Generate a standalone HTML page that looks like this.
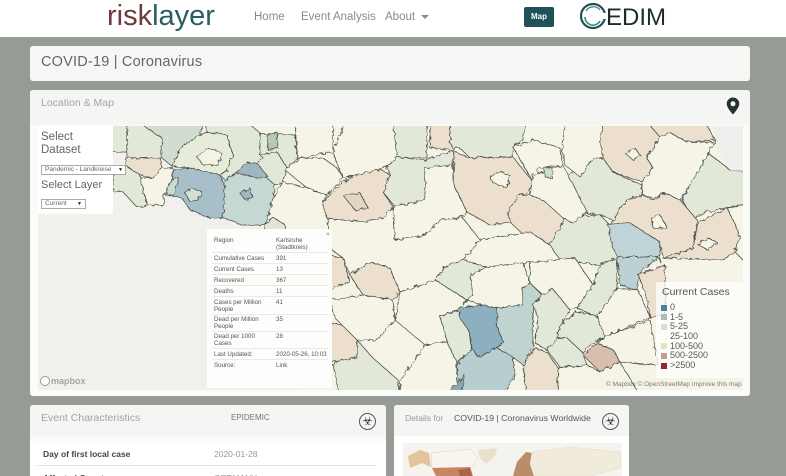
<!DOCTYPE html>
<html><head><meta charset="utf-8"><style>
html,body{margin:0;padding:0;width:786px;height:476px;overflow:hidden}
body{position:relative;background:#969b95;font-family:"Liberation Sans",sans-serif}
.a{position:absolute;white-space:nowrap}
.card{position:absolute;background:#f6f6f5;border-radius:3px}
.t{position:absolute;white-space:nowrap;font-size:6.2px;color:#555;line-height:7px}
.r{position:absolute;left:212px;width:116px;height:1px;background:#e9e9e6}
.l{position:absolute;left:661px;width:6px;height:6px}
.lt{position:absolute;left:670px;font-size:9px;color:#555;line-height:10px;white-space:nowrap}
</style></head><body>
<div class="a" style="left:0;top:0;width:786px;height:37px;background:#fff"></div>
<div class="a" style="left:107px;top:-2px;font-size:29px;line-height:36px;color:#2b5d60"><span style="color:#6f3a3d">risk</span>layer</div>
<div class="a" style="left:254px;top:11px;font-size:11.500px;color:#8a8a8a">Home</div>
<div class="a" style="left:301px;top:11px;font-size:11.500px;color:#8a8a8a">Event Analysis</div>
<div class="a" style="left:385px;top:11px;font-size:11.500px;color:#8a8a8a">About</div>
<div class="a" style="left:421px;top:15px;border:4px solid transparent;border-top-color:#8a8a8a;border-bottom:0"></div>
<div class="a" style="left:524px;top:7px;width:30px;height:20px;background:#1f5258;border-radius:2px;color:#fff;font-size:8px;font-weight:bold;line-height:20px;text-align:center">Map</div>
<svg class="a" style="left:578px;top:1px" width="30" height="30" viewBox="0 0 30 30"><circle cx="15" cy="15" r="12" fill="none" stroke="#1f5258" stroke-width="2.2"/><path d="M7 16a8 8 0 0 0 15 4" fill="none" stroke="#3e8a8c" stroke-width="1.6"/><path d="M8 10a8.500 8.500 0 0 1 14-1" fill="none" stroke="#3e8a8c" stroke-width="1.300"/><rect x="23" y="12" width="7" height="6" fill="#fff"/></svg>
<div class="a" style="left:606px;top:2px;font-size:24px;line-height:32px;color:#1c2c2e">EDIM</div>

<div class="card" style="left:30px;top:46px;width:720px;height:35px"></div>
<div class="a" style="left:41px;top:54px;font-size:14.500px;line-height:17px;color:#666;letter-spacing:.2px">COVID-19 | Coronavirus</div>

<div class="card" style="left:30px;top:90px;width:720px;height:306px;background:#fbfbfa"></div>
<div class="a" style="left:30px;top:90px;width:720px;height:35px;background:#f5f5f4;border-radius:3px 3px 0 0"></div>
<div class="a" style="left:41px;top:97px;font-size:10.500px;line-height:13px;color:#a5a5a5">Location &amp; Map</div>
<svg class="a" style="left:726px;top:97px" width="14" height="18" viewBox="0 0 14 18"><path fill-rule="evenodd" d="M7 0.500a6.300 6.300 0 0 1 6.300 6.300C13.300 11 7 17.500 7 17.500S.7 11 .7 6.800A6.300 6.300 0 0 1 7 .5zM7 4.300a2.500 2.500 0 1 0 0 5 2.500 2.500 0 0 0 0-5z" fill="#263230"/></svg>

<svg class="a" style="left:0;top:0" width="786" height="476" viewBox="0 0 786 476">
<defs>
<clipPath id="mc"><rect x="38" y="126" width="705" height="264"/></clipPath>
<filter id="j" x="-5%" y="-5%" width="110%" height="110%"><feTurbulence type="fractalNoise" baseFrequency=".22" numOctaves="2" seed="4"/><feDisplacementMap in="SourceGraphic" scale="4.500"/><feGaussianBlur stdDeviation=".25"/></filter>
<linearGradient id="bg" x1="0" x2="1"><stop offset="0" stop-color="#f1f0ec"/><stop offset=".2" stop-color="#f1f0eb"/><stop offset=".27" stop-color="#f3f3e6"/><stop offset="1" stop-color="#f5f4e6"/></linearGradient>
</defs>
<g clip-path="url(#mc)">
<rect x="38" y="126" width="705" height="264" fill="url(#bg)"/>
<g filter="url(#j)" stroke="#4a4f48" stroke-width=".8" stroke-linejoin="round">
<g fill="#f1f0ec" stroke="none"><path d="M38 210H210L240 225 262 228 290 240 300 390H38Z"/></g>
<g fill="#f5f4e6">
<path d="M273 198L283 182 307 188 327 195 323 202 327 218 332 232 285 232 265 225Z"/>
<path d="M327 218L367 222 383 217 393 207 395 240 425 235 440 220 462 217 480 240 463 260 447 265 435 280 400 292 390 268 370 262 350 275 343 258 332 250Z"/>
</g>
<g fill="#e1e8d7">
<path d="M108 122H127V152H108Z"/>
<path d="M127 122H162V158H127Z"/>
<path d="M113 168L125 165 140 175 143 188 147 205 137 207 123 192 113 192Z"/>
<path d="M205 122H247L260 133 263 158 257 163 247 163 237 172 225 180 220 175 227 170 233 155 227 135 207 132Z"/>
<path d="M173 167L180 148 200 135 207 132 227 135 233 155 227 170 220 175 190 168Z" fill="#e7ebd9"/>
<path d="M260 133L295 135 297 158 285 170 287 168 277 152 260 155Z"/>
<path d="M260 155L277 152 287 168 283 182 275 185 267 178 257 163 263 158Z"/>
<path d="M393 122H427V158L397 157Z"/>
<path d="M450 122H525L523 140 513 147 512 157 493 157 470 158 460 148 453 150 450 142Z"/>
<path d="M387 167L397 157 425 160 453 150 453 165 430 168 425 200 395 207 383 192 390 175Z"/>
<path d="M565 178L593 158 603 158 613 172 642 185 642 195 627 200 613 220 600 215 587 213 575 195Z"/>
<path d="M707 152L730 170 748 172V203L707 212 693 218 682 200 688 188Z"/>
<path d="M543 245L565 220 587 215 600 215 610 225 620 242 618 260 600 265 560 260Z"/>
<path d="M435 280L447 265 463 260 487 267 470 275 473 295 467 300 437 283Z"/>
<path d="M440 317L458 310 470 333 472 348 457 363 447 342Z"/>
<path d="M533 305L543 295 552 288 570 310 560 325 557 338 547 350 535 343 538 318Z"/>
<path d="M560 325L577 312 597 315 605 337 593 343 582 352 567 338 557 338Z"/>
<path d="M547 350L557 338 567 338 582 352 587 365 560 367Z"/>
<path d="M577 308L593 285 600 265 617 257 617 288 597 317Z"/>
<path d="M333 365L357 340 373 358 398 380 400 395H340Z"/>
</g>
<path d="M138 122H203L200 135 180 148 173 167 162 158 162 138Z" fill="#d1ddd0"/>
<path d="M267 135L277 132 278 148 268 150Z" fill="#b5c9bb"/>
<path d="M197 157L208 148 222 153 218 165 203 165Z" fill="#f4f3e4"/>
<g fill="#ecdfce">
<path d="M125 158L160 158 162 168 153 178 140 175 125 165Z"/>
<path d="M323 202L343 182 355 175 373 165 390 175 383 192 393 207 383 217 367 222 327 218Z"/>
<path d="M430 122H450V142L453 150 430 148Z"/>
<path d="M455 152L470 158 513 157 533 182 528 193 518 195 508 212 510 222 490 225 467 212 453 183Z"/>
<path d="M518 195L530 195 543 200 565 218 550 245 527 238 510 222 508 212Z"/>
<path d="M600 122H647L660 137 647 158 653 168 642 182 613 172 603 158 600 138Z"/>
<path d="M647 122H705L715 140 687 142 670 133 660 137Z"/>
<path d="M613 220L627 200 642 195 653 200 665 193 680 200 697 220 693 248 663 258 660 242 627 223 610 225Z"/>
<path d="M698 222L727 208 740 235 735 252 723 260 663 258 693 248Z"/>
<path d="M350 275L370 262 390 268 400 292 393 300 363 295Z"/>
<path d="M328 255L343 258 350 282 328 290Z"/>
<path d="M328 322L358 328 357 358 328 362Z"/>
<path d="M523 365L535 348 547 352 558 368 558 395H527Z"/>
<path d="M638 275L665 265V315L650 317 647 298Z"/>
</g>
<path d="M343 195L360 193 368 208 355 210Z" fill="#e4d5c0"/>
<g fill="#f5f4e6">
<path d="M140 178L153 178 162 168 173 168 172 180 163 195 165 205 147 205 143 188Z"/>
<path d="M285 170L300 158 323 158 337 168 343 178 327 195 307 188Z"/>
<path d="M295 122L333 122 333 152 297 158Z"/>
<path d="M333 152L345 122H393L397 157 387 167 357 175 343 178Z"/>
<path d="M425 168L453 165 453 183 467 212 462 217 440 220 425 235 395 240 393 207 425 200Z"/>
<path d="M513 147L533 140 560 148 563 165 540 168 533 182Z"/>
<path d="M530 195L533 175 563 165 587 212 573 223 563 218 543 200Z"/>
<path d="M565 122H603L600 138 603 158 593 158 580 177 565 165 562 150Z"/>
<path d="M647 158L660 137 670 133 687 142 715 142 703 163 688 188 680 200 665 193 653 198 643 195 642 182 653 168Z"/>
<path d="M727 208L748 205V265L735 252 740 235Z"/>
<path d="M490 177L500 172 510 175 507 188 493 183Z"/>
<path d="M625 153L635 148 640 155 633 160Z"/>
<path d="M652 218L660 215 667 228 653 228Z"/>
<path d="M698 245L707 238 717 242 708 250Z"/>
<path d="M400 292L435 280 467 300 460 308 440 317 447 342 425 345 395 320Z"/>
<path d="M330 300L363 295 393 300 395 320 375 340 357 340 335 318Z"/>
<path d="M400 380L425 345 447 342 457 363 457 395 400 395Z"/>
<path d="M487 267L523 262 530 283 522 288 523 305 497 308 483 305 467 300 473 295 470 275Z"/>
<path d="M530 262L575 258 593 285 577 308 570 310 552 288 543 295 530 283Z"/>
<path d="M597 317L617 288 638 290 650 317 605 337Z"/>
<path d="M605 337L650 320 658 365 620 362 613 350 597 343Z"/>
<path d="M558 368L587 365 600 372 620 362 640 395H558Z"/>
<path d="M530 232L550 245 560 260 530 262 487 267 463 260 480 240Z"/>
</g>
<g fill="#a6bfc8"><path d="M173 170L190 168 220 175 225 188 225 202 222 218 210 218 190 210 182 198 165 195 173 182Z"/></g>
<path d="M172 180L179 178 173 195 165 195Z" fill="#c8d9d6"/>
<path d="M185 193L193 188 202 192 198 200 190 202Z" fill="#d3dfd2"/>
<path d="M225 180L237 172 267 178 275 185 273 198 265 225 243 225 223 218 225 188Z" fill="#c6d8d4"/>
<path d="M236 173L247 163 257 163 268 177 257 178Z" fill="#9db7c1"/>
<path d="M240 193L250 188 253 197 245 200Z" fill="#a0b9c1"/>
<path d="M265 225L273 217 285 225 287 240 265 240Z" fill="#dfe6d4"/>
<path d="M543 167L553 168 552 178 545 177Z" fill="#cedcd0"/>
<path d="M608 225L630 223 660 242 660 262 658 257 617 257 612 245Z" fill="#bfd4d6"/>
<path d="M617 257L658 257 638 275 637 290 620 285Z" fill="#bcd1d4"/>
<path d="M497 308L523 305 522 288 530 283 542 295 533 305 533 345 523 365 513 357 497 348 503 342 497 327Z" fill="#bfd3d1"/>
<path d="M457 365L472 348 478 357 497 348 513 357 515 375 503 395H457Z" fill="#b7cdd0"/>
<path d="M460 308L483 305 497 308 497 327 503 342 497 348 478 357 472 348 470 333 460 318Z" fill="#8eafc0"/>
<path d="M452 387L465 375 462 395H450Z" fill="#8ba7b4"/>
<path d="M583 355L597 343 613 350 620 362 600 372Z" fill="#d8bead"/>
<path d="M715 122H748V172L730 170 715 148Z" fill="#eeeeec" stroke="none"/>
</g>
<rect x="656" y="282" width="87" height="96" fill="#fff" fill-opacity=".72"/>
</g>
<text x="606" y="386" font-family="Liberation Sans" font-size="6.500" fill="#7c7c7c">© Mapbox © OpenStreetMap  Improve this map</text>
<circle cx="45" cy="381" r="4.500" fill="#fff" stroke="#9b9b9b" stroke-width="1"/>
<text x="51" y="384" font-family="Liberation Sans" font-size="9" font-weight="bold" fill="#a5a5a5">mapbox</text>
</svg>

<!-- dataset panel -->
<div class="a" style="left:38px;top:126px;width:75px;height:88px;background:#fff"></div>
<div class="a" style="left:41px;top:131px;font-size:11.500px;line-height:13px;color:#666;white-space:normal;width:60px">Select Dataset</div>
<div class="a" style="left:41px;top:165px;width:85px;height:10px;border:1px solid #aaa;box-sizing:border-box;background:#fff;font-size:6.500px;line-height:8px;color:#666;padding-left:3px">Pandemic - Landkreise<span style="position:absolute;right:2px;font-size:5px;color:#222">▼</span></div>
<div class="a" style="left:41px;top:178px;font-size:11px;line-height:14px;color:#666">Select Layer</div>
<div class="a" style="left:41px;top:199px;width:45px;height:10px;border:1px solid #aaa;box-sizing:border-box;background:#fff;font-size:6.500px;line-height:8px;color:#666;padding-left:3px">Current<span style="position:absolute;right:3px;font-size:5px;color:#222">▼</span></div>

<!-- popup -->
<div class="a" style="left:207px;top:229px;width:125px;height:159px;background:#fdfdfb"></div>
<div class="t" style="left:326px;top:231px;color:#777">×</div>
<div class="t" style="left:214px;top:237px">Region</div><div class="t" style="left:276px;top:237px">Karlsruhe<br>(Stadtkreis)</div>
<div class="r" style="top:252px"></div>
<div class="t" style="left:214px;top:255px">Cumulative Cases</div><div class="t" style="left:276px;top:255px">391</div>
<div class="r" style="top:263px"></div>
<div class="t" style="left:214px;top:266px">Current Cases</div><div class="t" style="left:276px;top:266px">13</div>
<div class="r" style="top:274px"></div>
<div class="t" style="left:214px;top:277px">Recovered</div><div class="t" style="left:276px;top:277px">367</div>
<div class="r" style="top:285px"></div>
<div class="t" style="left:214px;top:288px">Deaths</div><div class="t" style="left:276px;top:288px">11</div>
<div class="r" style="top:296px"></div>
<div class="t" style="left:214px;top:299px">Cases per Million<br>People</div><div class="t" style="left:276px;top:299px">41</div>
<div class="r" style="top:314px"></div>
<div class="t" style="left:214px;top:316px">Dead per Million<br>People</div><div class="t" style="left:276px;top:316px">35</div>
<div class="r" style="top:331px"></div>
<div class="t" style="left:214px;top:333px">Dead per 1000<br>Cases</div><div class="t" style="left:276px;top:333px">28</div>
<div class="r" style="top:348px"></div>
<div class="t" style="left:214px;top:351px">Last Updated:</div><div class="t" style="left:276px;top:351px">2020-05-26, 10:03</div>
<div class="r" style="top:359px"></div>
<div class="t" style="left:214px;top:362px">Source:</div><div class="t" style="left:276px;top:362px">Link</div>

<!-- legend -->
<div class="a" style="left:662px;top:286px;font-size:10.500px;line-height:13px;color:#555">Current Cases</div>
<div class="l" style="top:305px;background:#4f7f96"></div><div class="lt" style="top:302px">0</div>
<div class="l" style="top:314px;background:#a8bfbd"></div><div class="lt" style="top:312px">1-5</div>
<div class="l" style="top:324px;background:#d9dfd4"></div><div class="lt" style="top:321px">5-25</div>
<div class="lt" style="top:331px">25-100</div>
<div class="l" style="top:343px;background:#e6dfc0"></div><div class="lt" style="top:341px">100-500</div>
<div class="l" style="top:353px;background:#bfa08f"></div><div class="lt" style="top:350px">500-2500</div>
<div class="l" style="top:363px;background:#8e2c2c"></div><div class="lt" style="top:360px">&gt;2500</div>

<!-- event card -->
<div class="card" style="left:30px;top:405px;width:356px;height:71px;background:#fff;border-radius:3px 3px 0 0"></div>
<div class="a" style="left:30px;top:405px;width:356px;height:31px;background:#f5f5f4;border-radius:3px 3px 0 0"></div>
<div class="a" style="left:30px;top:436px;width:356px;height:5px;background:#fafafa"></div>
<div class="a" style="left:41px;top:412px;font-size:10.500px;line-height:13px;color:#a3a3a3">Event Characteristics</div>
<div class="a" style="left:231px;top:413px;font-size:8px;line-height:10px;color:#777">EPIDEMIC</div>
<div class="a" style="left:359px;top:413px;width:15px;height:15px;border:1px solid #555;border-radius:50%;font-family:'DejaVu Sans',sans-serif;font-size:12px;line-height:15px;text-align:center;color:#333">☣</div>
<div class="a" style="left:43px;top:449px;font-size:8.500px;line-height:10px;color:#444;font-weight:bold">Day of first local case</div>
<div class="a" style="left:214px;top:449px;font-size:8.500px;line-height:10px;color:#999">2020-01-28</div>
<div class="a" style="left:37px;top:465px;width:340px;height:1px;background:#e4e4e2"></div>
<div class="a" style="left:43px;top:473px;font-size:8.500px;line-height:10px;color:#444;font-weight:bold">Affected Country</div>
<div class="a" style="left:214px;top:473px;font-size:8.500px;line-height:10px;color:#999">GERMANY</div>

<!-- details card -->
<div class="card" style="left:394px;top:405px;width:235px;height:71px;background:#fff;border-radius:3px 3px 0 0"></div>
<div class="a" style="left:394px;top:405px;width:235px;height:31px;background:#f5f5f4;border-radius:3px 3px 0 0"></div>
<div class="a" style="left:405px;top:413px;font-size:8.500px;line-height:10px;color:#999">Details for</div>
<div class="a" style="left:454px;top:413px;font-size:8.700px;line-height:10px;color:#555">COVID-19 | Coronavirus Worldwide</div>
<div class="a" style="left:602px;top:413px;width:15px;height:15px;border:1px solid #555;border-radius:50%;font-family:'DejaVu Sans',sans-serif;font-size:12px;line-height:15px;text-align:center;color:#333">☣</div>
<svg class="a" style="left:403px;top:443px" width="219" height="33" viewBox="403 443 219 33">
<rect x="403" y="443" width="219" height="33" fill="#f4f3ee"/>
<path d="M408 456L420 450 429 453 431 467 422 463 410 468Z" fill="#e4c49a"/>
<path d="M431 453L470 449 478 458 472 468 432 468Z" fill="#f7f5ee" stroke="#d8d4c6" stroke-width=".5"/>
<path d="M478 450L497 448 495 456 486 464 480 458Z" fill="#e8e2cc"/>
<path d="M432 468L470 467 473 476H436Z" fill="#c98562"/>
<path d="M458 470L470 468 472 476H460Z" fill="#a8654a"/>
<path d="M517 462L526 452 532 453 530 464 534 476H513Z" fill="#b98d6a"/>
<path d="M532 452L570 447 620 452 621 468 590 476H534L530 464Z" fill="#f0ebda" stroke="#dcd6c4" stroke-width=".4"/>
</svg>
</body></html>
